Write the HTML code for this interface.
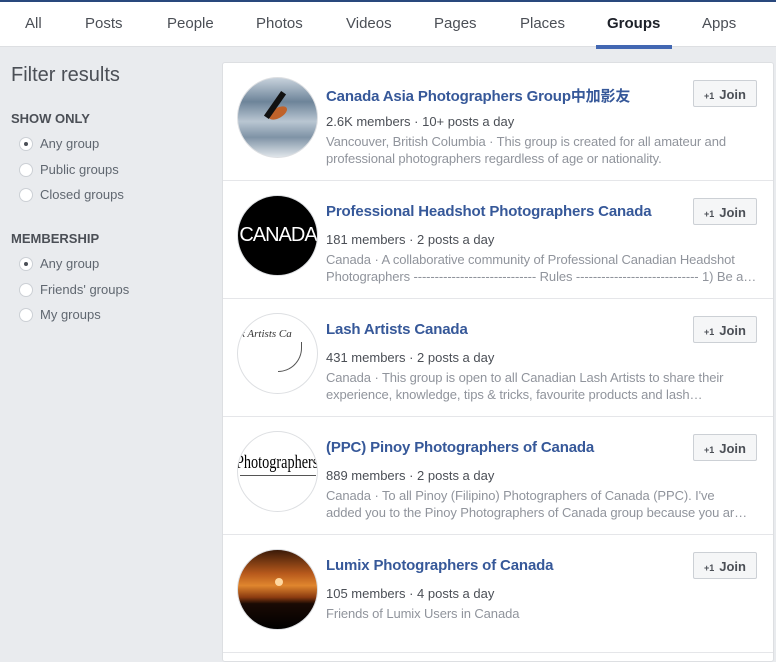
<!DOCTYPE html>
<html><head><meta charset="utf-8"><style>
*{margin:0;padding:0;box-sizing:border-box}
body{width:776px;height:651px;overflow:hidden;background:#e9ebee;font-family:"Liberation Sans","Noto Sans CJK SC",sans-serif;position:relative}
.top{position:absolute;left:0;top:0;width:776px;height:2px;background:#29487d}
.nav{position:absolute;left:0;top:2px;width:776px;height:45px;background:#fff;border-bottom:1px solid #dddfe2}
.nav span{position:absolute;top:13px;font-size:15px;color:#4b4f56}
.nav span.act{font-weight:bold;color:#1d2129}
.ul{position:absolute;left:596px;top:43px;width:76px;height:4px;background:#4267b2}
h1{position:absolute;left:11px;top:64px;font-size:20px;font-weight:normal;color:#4b4f56}
.hd{font-size:13px;font-weight:bold;position:absolute;left:11px;color:#4b4f56}
.rad{position:absolute;left:19px;font-size:13px;color:#606770}
.rad i{position:absolute;left:0;top:0;width:14px;height:14px;border-radius:50%;background:#fff;border:1px solid #ccd0d5}
.rad i.on::after{content:"";position:absolute;left:4px;top:4px;width:4px;height:4px;border-radius:50%;background:#4b4f56}
.rad b{font-weight:normal;position:absolute;left:21px;top:-1px;white-space:nowrap}
.card{position:absolute;left:222px;top:62px;width:552px;height:600px;background:#fff;border:1px solid #dddfe2;border-radius:3px}
.row{position:absolute;left:0;width:550px;height:118px;border-bottom:1px solid #e5e6e9}
.av{position:absolute;left:14px;top:14px;width:81px;height:81px;border-radius:50%;overflow:hidden;border:1px solid #dddfe2}
.t{position:absolute;left:103px;top:22px;font-size:15px;font-weight:bold;color:#365899;white-space:nowrap;letter-spacing:-0.15px}
.m{position:absolute;left:103px;top:51px;font-size:13px;color:#4b4f56}
.d{position:absolute;left:103px;top:70px;width:430px;font-size:13px;line-height:17px;color:#90949c}
.d div{white-space:nowrap;overflow:hidden;letter-spacing:-0.1px}
.j{position:absolute;left:470px;top:17px;width:64px;height:27px;border:1px solid #ccd0d5;border-radius:2px;background:#f5f6f7;font-size:13px;font-weight:bold;color:#4b4f56;padding:6px 0 0 10px}
.j small{font-size:9px;margin-right:5px}
</style></head><body>
<div class="top"></div>
<div class="nav">
<span style="left:25px">All</span><span style="left:85px">Posts</span><span style="left:167px">People</span><span style="left:256px">Photos</span><span style="left:346px">Videos</span><span style="left:434px">Pages</span><span style="left:520px">Places</span><span class="act" style="left:607px">Groups</span><span style="left:702px">Apps</span>
<div class="ul"></div>
</div>
<h1>Filter results</h1>
<div class="hd" style="top:111px">SHOW ONLY</div>
<div class="rad" style="top:137px"><i class="on"></i><b>Any group</b></div>
<div class="rad" style="top:163px"><i></i><b>Public groups</b></div>
<div class="rad" style="top:188px"><i></i><b>Closed groups</b></div>
<div class="hd" style="top:231px">MEMBERSHIP</div>
<div class="rad" style="top:257px"><i class="on"></i><b>Any group</b></div>
<div class="rad" style="top:283px"><i></i><b>Friends' groups</b></div>
<div class="rad" style="top:308px"><i></i><b>My groups</b></div>

<div class="card">
<div class="row" style="top:0">
<div class="av" style="background:linear-gradient(180deg,#c8d2dc 0%,#6d8499 30%,#b9c6d2 55%,#7f93a6 75%,#dfe5ea 100%)"><div style="position:absolute;left:30px;top:30px;width:20px;height:10px;background:#c0622a;border-radius:50%;transform:rotate(-30deg)"></div><div style="position:absolute;left:34px;top:12px;width:6px;height:30px;background:#111;transform:rotate(35deg)"></div></div>
<div class="t">Canada Asia Photographers Group中加影友</div>
<div class="m">2.6K members · 10+ posts a day</div>
<div class="d"><div>Vancouver, British Columbia · This group is created for all amateur and</div><div>professional photographers regardless of age or nationality.</div></div>
<div class="j"><small>+1</small>Join</div>
</div>
<div class="row" style="top:118px">
<div class="av" style="background:#000"><div style="position:absolute;left:0;top:28px;width:80px;text-align:center;color:#fff;font-size:20px;letter-spacing:-1px">CANADA</div></div>
<div class="t">Professional Headshot Photographers Canada</div>
<div class="m">181 members · 2 posts a day</div>
<div class="d"><div>Canada · A collaborative community of Professional Canadian Headshot</div><div>Photographers ----------------------------- Rules ----------------------------- 1) Be a…</div></div>
<div class="j"><small>+1</small>Join</div>
</div>
<div class="row" style="top:236px">
<div class="av" style="background:#fff"><div style="position:absolute;left:2px;top:14px;font-size:11px;font-style:italic;font-family:'Liberation Serif',serif;color:#333;white-space:nowrap">k Artists Ca</div><div style="position:absolute;left:40px;top:28px;width:24px;height:30px;border-bottom:1px solid #555;border-right:1px solid #555;border-radius:0 0 30px 0"></div></div>
<div class="t">Lash Artists Canada</div>
<div class="m">431 members · 2 posts a day</div>
<div class="d"><div>Canada · This group is open to all Canadian Lash Artists to share their</div><div>experience, knowledge, tips &amp; tricks, favourite products and lash…</div></div>
<div class="j"><small>+1</small>Join</div>
</div>
<div class="row" style="top:354px">
<div class="av" style="background:#fff"><div style="position:absolute;left:-2px;top:20px;font-size:19px;font-family:'Liberation Serif',serif;color:#000;white-space:nowrap;transform:scaleX(.75);transform-origin:left">Photographers of</div><div style="position:absolute;left:2px;top:43px;width:76px;height:1px;background:#555"></div></div>
<div class="t">(PPC) Pinoy Photographers of Canada</div>
<div class="m">889 members · 2 posts a day</div>
<div class="d"><div>Canada · To all Pinoy (Filipino) Photographers of Canada (PPC). I've</div><div>added you to the Pinoy Photographers of Canada group because you ar…</div></div>
<div class="j"><small>+1</small>Join</div>
</div>
<div class="row" style="top:472px">
<div class="av" style="background:linear-gradient(180deg,#3a1a08 0%,#b85a1c 30%,#e0862e 45%,#8a3a10 60%,#1a0a04 68%,#000 100%)"><div style="position:absolute;left:37px;top:28px;width:8px;height:8px;border-radius:50%;background:#ffd8a0"></div></div>
<div class="t">Lumix Photographers of Canada</div>
<div class="m">105 members · 4 posts a day</div>
<div class="d"><div>Friends of Lumix Users in Canada</div></div>
<div class="j"><small>+1</small>Join</div>
</div>
</div>
</body></html>
